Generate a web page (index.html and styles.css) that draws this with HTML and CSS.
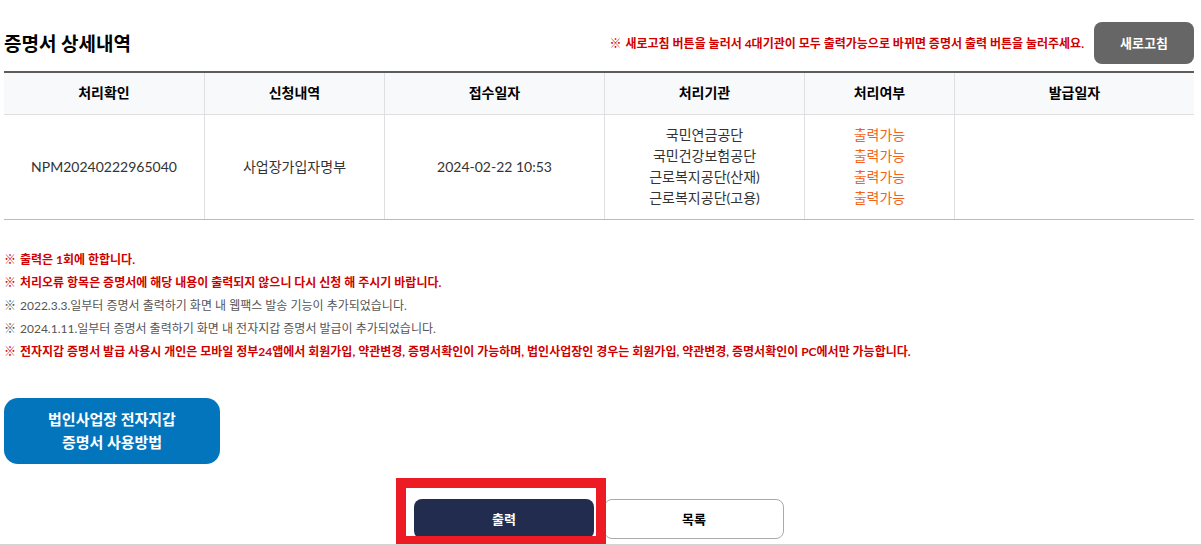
FILE: index.html
```html
<!DOCTYPE html>
<html lang="ko">
<head>
<meta charset="utf-8">
<meta name="viewport" content="width=device-width, initial-scale=1">
<title>증명서 상세내역</title>
<link rel="stylesheet" href="styles.css">
</head>
<body>
<main class="page">
  <header class="heading">
    <h1 class="title">증명서 상세내역</h1>
    <div class="refresh">
      <p class="note important"><span class="mark">※</span><span>새로고침 버튼을 눌러서 4대기관이 모두 출력가능으로 바뀌면 증명서 출력 버튼을 눌러주세요.</span></p>
      <button type="button" class="btn-refresh">새로고침</button>
    </div>
  </header>

  <table class="detail">
    <colgroup>
      <col class="col-id"><col class="col-type"><col class="col-received"><col class="col-agency"><col class="col-status"><col class="col-issued">
    </colgroup>
    <thead>
      <tr><th scope="col">처리확인</th><th scope="col">신청내역</th><th scope="col">접수일자</th><th scope="col">처리기관</th><th scope="col">처리여부</th><th scope="col">발급일자</th></tr>
    </thead>
    <tbody>
      <tr>
        <td>NPM20240222965040</td>
        <td>사업장가입자명부</td>
        <td>2024-02-22 10:53</td>
        <td>국민연금공단<br>국민건강보험공단<br>근로복지공단(산재)<br>근로복지공단(고용)</td>
        <td class="available">출력가능<br>출력가능<br>출력가능<br>출력가능</td>
        <td></td>
      </tr>
    </tbody>
  </table>

  <ul class="notes">
    <li class="note important"><span class="mark">※</span><span>출력은 1회에 한합니다.</span></li>
    <li class="note important"><span class="mark">※</span><span>처리오류 항목은 증명서에 해당 내용이 출력되지 않으니 다시 신청 해 주시기 바랍니다.</span></li>
    <li class="note"><span class="mark">※</span><span>2022.3.3.일부터 증명서 출력하기 화면 내 웹팩스 발송 기능이 추가되었습니다.</span></li>
    <li class="note"><span class="mark">※</span><span>2024.1.11.일부터 증명서 출력하기 화면 내 전자지갑 증명서 발급이 추가되었습니다.</span></li>
    <li class="note important"><span class="mark">※</span><span>전자지갑 증명서 발급 사용시 개인은 모바일 정부24앱에서 회원가입, 약관변경, 증명서확인이 가능하며, 법인사업장인 경우는 회원가입, 약관변경, 증명서확인이 PC에서만 가능합니다.</span></li>
  </ul>

  <button type="button" class="btn-guide">법인사업장 전자지갑<br>증명서 사용방법</button>

  <div class="actions">
    <div class="highlight"><button type="button" class="btn btn-print">출력</button></div>
    <button type="button" class="btn btn-list">목록</button>
  </div>
</main>
</body>
</html>
```
FILE: styles.css
```css
* {
  box-sizing: border-box;
}

body {
  margin: 0;
  background: #fff;
  color: #333;
  font-family: Lato, "Noto Sans CJK KR", sans-serif;
  font-size: 14px;
  line-height: 21px;
}

button {
  margin: 0;
  padding: 0 0 2px;
  border: 0;
  font-family: inherit;
  cursor: pointer;
}

.page {
  padding: 22px 7px 5px 4px;
  border-bottom: 1px solid #d4d4d4;
}

.heading {
  display: flex;
  justify-content: space-between;
  align-items: center;
  margin-bottom: 7px;
}

.title {
  margin: 0;
  padding-top: 2px;
  color: #000;
  font-size: 19px;
  font-weight: 700;
  line-height: 28px;
}

.refresh {
  display: flex;
  align-items: center;
  gap: 10px;
}

.note {
  display: flex;
  gap: 4px;
  margin: 0;
  color: #555;
  font-size: 12px;
  line-height: 23px;
}

.mark {
  flex: none;
  width: 12px;
}

.important {
  color: #d00000;
  font-weight: 700;
}

.btn-refresh {
  flex: none;
  width: 100px;
  height: 42px;
  border-radius: 8px;
  background: #666;
  color: #fff;
  font-size: 13px;
  font-weight: 700;
}

.detail {
  width: 100%;
  border-top: 2px solid #5c5c5c;
  border-bottom: 1px solid #bbbac4;
  border-spacing: 0;
  table-layout: fixed;
  text-align: center;
}

.col-id,
.col-agency {
  width: 200px;
}

.col-type {
  width: 180px;
}

.col-received {
  width: 220px;
}

.col-status {
  width: 150px;
}

.detail th,
.detail td {
  padding: 9px 0 11px;
  border-left: 1px solid #dfdfe1;
}

.detail th:first-child,
.detail td:first-child {
  border-left: 0;
}

.detail th {
  border-bottom: 1px solid #dfdfe1;
  background: #f7f9fb;
  color: #000;
  font-weight: 700;
}

.detail .available {
  color: #f26419;
}

.notes {
  margin: 28px 0 35px;
  padding: 0;
  list-style: none;
}

.btn-guide {
  display: block;
  width: 216px;
  height: 66px;
  padding-bottom: 0;
  border-radius: 14px;
  background: #0275bd;
  color: #fff;
  font-size: 15px;
  font-weight: 700;
  line-height: 23px;
}

.actions {
  display: flex;
  justify-content: center;
  gap: 10px;
  margin-top: 35px;
}

.btn {
  display: block;
  width: 180px;
  height: 40px;
  border-radius: 8px;
  font-size: 13px;
  font-weight: 700;
}

.btn-print {
  background: #212c4f;
  color: #fff;
}

.btn-list {
  border: 1px solid #aaa;
  background: #fff;
  color: #000;
}

.highlight {
  position: relative;
  z-index: 1;
}

.highlight::after {
  content: "";
  position: absolute;
  inset: -21px -12px -5px -18px;
  border: 10px solid #ed1c24;
  border-bottom-width: 8px;
  pointer-events: none;
}
```
